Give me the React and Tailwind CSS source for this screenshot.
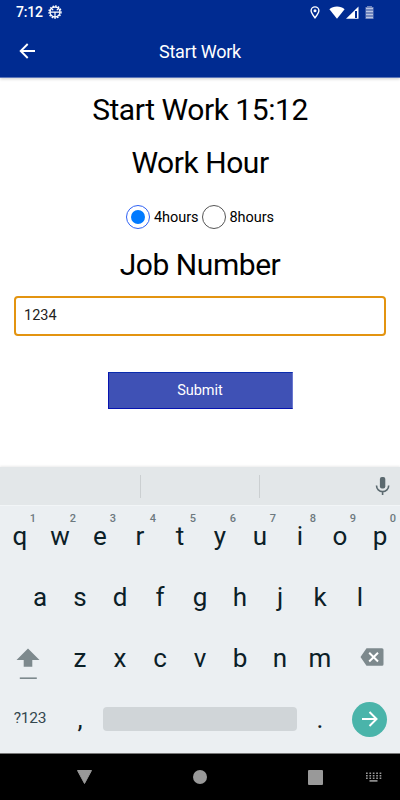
import React from "react";

function StatusBar() {
  return (
    <div className="flex h-6 items-center pl-[16px] pr-[26px] text-white">
      <span className="w-[27px] text-[14px] leading-6 font-medium tracking-[-0.2px]">7:12</span>
      <svg className="ml-[5px]" width="14" height="14" viewBox="0 0 14 14" fill="none" stroke="#fff">
        <circle cx="7" cy="7" r="6" strokeWidth="1.4" strokeDasharray="1.6 1.17" />
        <circle cx="7" cy="7" r="5" strokeWidth="1.3" />
        <path d="M2 7.1h10M7 7v5M4 4.6h1.3M8.7 4.6H10" strokeWidth="1.2" />
      </svg>
      <div className="grow" />
      <svg width="10" height="13" viewBox="0 0 10 13" fill="none" stroke="#fff">
        <path d="M5 11.8C3 9.2 1.1 6.9 1.1 4.8a3.9 3.9 0 0 1 7.8 0C8.9 6.9 7 9.2 5 11.8z" strokeWidth="1.4" />
        <circle cx="5" cy="4.8" r="1.5" fill="#fff" stroke="none" />
      </svg>
      <svg className="ml-[9px]" width="16" height="13" viewBox="0 0 16 13" fill="#fff">
        <path d="M8 12.8.4 3.2C2.400 1.400 5 .5 8 .5s5.600.9 7.600 2.700z" />
      </svg>
      <svg className="ml-px" width="13" height="13" viewBox="0 0 13 13">
        <path d="M0 12.800 12.500.5v12.300z" fill="#fff" />
        <path d="M9 5h2v7H9z" fill="#002b91" />
      </svg>
      <svg className="ml-[6px]" width="9" height="13" viewBox="0 0 9 13">
        <path d="M2 0h5v1h1.500v12H.5V1H2z" fill="#7186be" />
        <path d="M1 2.500h7M1 5.500h7M1 8.500h7M1 11.500h7" stroke="#b9c4e2" strokeWidth="1" />
      </svg>
    </div>
  );
}

function Header() {
  return (
    <div className="h-[78px] shrink-0 border-b border-[#5c76b9] bg-[#002b91] shadow-[0_1px_3px_rgba(0,0,0,0.2)]">
      <StatusBar />
      <div className="grid h-[53px] grid-cols-[56px_1fr_56px] items-center">
        <svg className="ml-[19px]" width="17" height="16" viewBox="0 0 17 16" fill="none" stroke="#fff" strokeWidth="1.9">
          <path d="M16 8H2M8.700 1 1.700 8l7 7" />
        </svg>
        <div className="pt-[2px] text-center text-[18px] tracking-[-0.25px] text-white">Start Work</div>
      </div>
    </div>
  );
}

function Radio({ label, checked }) {
  return (
    <div className="flex items-center gap-[4px]">
      <div className={"flex size-6 items-center justify-center rounded-full border " + (checked ? "border-[#2f62f5]" : "border-[#555]")}>
        {checked && <div className="size-[14px] rounded-full bg-[#007aff]" />}
      </div>
      <span className="pt-[2px] text-[14.500px] leading-[22px] tracking-[-0.05px]">{label}</span>
    </div>
  );
}

function Key({ children, hint }) {
  return (
    <div className="relative w-10 text-center text-[26px] leading-[36px] text-[#0b2027]">
      {children}
      {hint && <span className="absolute left-[28px] top-[-6px] w-[10px] text-center text-[11px] leading-[14px] font-medium text-[#6d797f]">{hint}</span>}
    </div>
  );
}

function Keyboard() {
  return (
    <div className="flex h-[286px] shrink-0 flex-col bg-[#ebeff2] shadow-[0_-1px_2px_rgba(0,0,0,0.08)]">
      <div className="flex h-[39px] items-center border-b border-[#f2f5f7] bg-[#e3e7e9]">
        <div className="h-[23px] w-[141px] border-r border-[#cbcfd1]" />
        <div className="h-[23px] w-[119px] border-r border-[#cbcfd1]" />
        <svg className="ml-[115px]" width="15" height="20" viewBox="0 0 15 20">
          <rect x="4.900" y="1" width="5.400" height="11.500" rx="2" fill="#5b696f" />
          <path d="M1.500 9.500a6.100 6.100 0 0 0 12.200 0M7.600 15.600V19" fill="none" stroke="#5b696f" strokeWidth="1.600" />
        </svg>
      </div>
      <div className="mt-[12px] flex">
        {[..."qwertyuiop"].map((k, i) => <Key key={k} hint={String((i + 1) % 10)}>{k}</Key>)}
      </div>
      <div className="mt-[25px] flex justify-center">
        {[..."asdfghjkl"].map((k) => <Key key={k}>{k}</Key>)}
      </div>
      <div className="mt-[25px] flex h-9">
        <svg className="mr-[20px] ml-4 shrink-0" width="24" height="42" viewBox="0 0 24 42" fill="#7d898d">
          <path d="M12 8.500 23.500 20h-7.200v6.800H7.700V20H.5z" />
          <rect x="3.800" y="37.400" width="17" height="1.600" />
        </svg>
        {[..."zxcvbnm"].map((k) => <Key key={k}>{k}</Key>)}
        <svg className="ml-5 mt-[8px]" width="24" height="18" viewBox="0 0 24 18">
          <path d="M6.500.2H22a1.500 1.500 0 0 1 1.500 1.500v14.600a1.500 1.500 0 0 1-1.500 1.500H6.500L.5 9z" fill="#7d898d" />
          <path d="m9.200 4.700 8.800 8.800m0-8.800-8.800 8.800" stroke="#fff" strokeWidth="2" />
        </svg>
      </div>
      <div className="mt-[25px] flex h-9 items-center">
        <div className="w-[60px] text-center text-[15.500px] tracking-[-0.2px] text-[#34474f]">?123</div>
        <Key>,</Key>
        <div className="ml-[3px] mr-[3px] h-[24px] w-[194px] rounded bg-[#d0d5d8]" />
        <Key>.</Key>
        <div className="ml-3 flex size-[35px] items-center justify-center rounded-full bg-[#4ab4aa]">
          <svg width="17" height="16" viewBox="0 0 17 16" fill="none" stroke="#fff" strokeWidth="2">
            <path d="M1 8h14M8.500 1l7 7-7 7" />
          </svg>
        </div>
      </div>
    </div>
  );
}

function NavBar() {
  return (
    <div className="flex h-[47px] shrink-0 items-center border-t border-[#777] bg-black">
      <svg className="ml-[76px]" width="17" height="16" viewBox="0 0 17 16">
        <path d="M1.500 1.500h14L8.500 14.500z" fill="#999" stroke="#999" strokeLinejoin="round" />
      </svg>
      <div className="ml-[100px] size-[14px] rounded-full bg-[#999]" />
      <div className="ml-[101px] size-[15px] rounded-[1px] bg-[#999]" />
      <svg className="ml-[42px]" width="17" height="10" viewBox="0 0 17 10" fill="none" stroke="#999">
        <path d="M1 1.200h16M1 3.700h16M1 6.200h16" strokeWidth="1.500" strokeDasharray="1.700 1.700" />
        <path d="M4.500 8.900h8" strokeWidth="1.600" />
      </svg>
    </div>
  );
}

export default function App() {
  return (
    <div className="flex h-[800px] w-[400px] flex-col overflow-hidden bg-white font-[Roboto,sans-serif] text-black">
      <Header />
      <div className="flex grow flex-col items-center">
        <h1 className="mt-[12px] text-[30px] leading-10 tracking-[-0.45px]">Start Work 15:12</h1>
        <h1 className="mt-[13px] text-[30px] leading-10 tracking-[-0.45px]">Work Hour</h1>
        <div className="mt-[22px] flex gap-[3px]">
          <Radio label="4hours" checked />
          <Radio label="8hours" />
        </div>
        <h1 className="mt-[16px] text-[30px] leading-10 tracking-[-0.45px]">Job Number</h1>
        <div className="mt-[11px] flex h-10 w-[372px] items-center rounded border-2 border-[#e39410] pl-[8px] text-[14.500px] text-[#222]">1234</div>
        <button className="mt-[36px] h-[37px] w-[185px] border border-[#0713b0] border-t-[#0a2cae] border-r-[#6a78d0] bg-[#3f51b5] text-[14.500px] text-white">Submit</button>
      </div>
      <Keyboard />
      <NavBar />
    </div>
  );
}
